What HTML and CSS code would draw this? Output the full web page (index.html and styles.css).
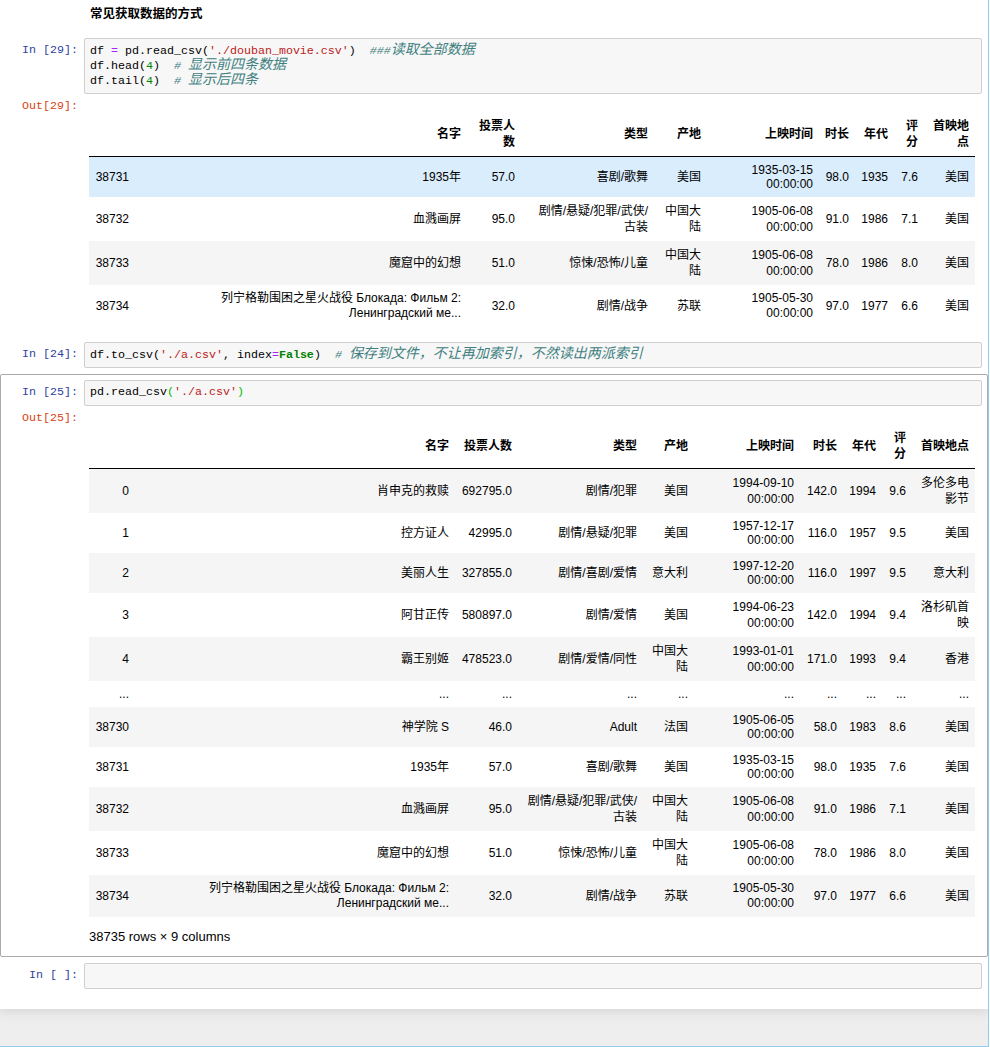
FILE: index.html
```html
<!DOCTYPE html>
<html lang="zh">
<head>
<meta charset="utf-8">
<title>Notebook</title>
<link rel="stylesheet" href="styles.css">
</head>
<body>
<div class="site">
  <div class="notebook">
    <div class="cell md-cell">
      <div class="prompt"></div>
      <div class="md-text">常见获取数据的方式</div>
    </div>

    <div class="cell">
      <div class="input">
        <div class="prompt in">In&nbsp;[29]:</div>
        <div class="code-box">
          <div class="line">df <span class="op">=</span> pd.read_csv(<span class="str">'./douban_movie.csv'</span>)  <span class="cm">###<span class="zh">读取全部数据</span></span></div>
          <div class="line">df.head(<span class="num">4</span>)  <span class="cm"># <span class="zh">显示前四条数据</span></span></div>
          <div class="line">df.tail(<span class="num">4</span>)  <span class="cm"># <span class="zh">显示后四条</span></span></div>
        </div>
      </div>
      <div class="output">
        <div class="prompt out">Out[29]:</div>
        <div class="out-sub">
          <table class="df t1">
            <colgroup><col><col><col><col><col><col><col><col><col><col></colgroup>
            <thead>
              <tr class="tall"><th></th><th>名字</th><th>投票人数</th><th>类型</th><th>产地</th><th>上映时间</th><th>时长</th><th>年代</th><th>评分</th><th>首映地点</th></tr>
            </thead>
            <tbody>
              <tr class="hover"><th>38731</th><td>1935年</td><td>57.0</td><td>喜剧/歌舞</td><td>美国</td><td>1935-03-15 00:00:00</td><td>98.0</td><td>1935</td><td>7.6</td><td>美国</td></tr>
              <tr class="tall"><th>38732</th><td>血溅画屏</td><td>95.0</td><td>剧情/悬疑/犯罪/武侠/古装</td><td>中国大陆</td><td>1905-06-08 00:00:00</td><td>91.0</td><td>1986</td><td>7.1</td><td>美国</td></tr>
              <tr class="tall"><th>38733</th><td>魔窟中的幻想</td><td>51.0</td><td>惊悚/恐怖/儿童</td><td>中国大陆</td><td>1905-06-08 00:00:00</td><td>78.0</td><td>1986</td><td>8.0</td><td>美国</td></tr>
              <tr class="mid"><th>38734</th><td>列宁格勒围困之星火战役 Блокада: Фильм 2: Ленинградский ме...</td><td>32.0</td><td>剧情/战争</td><td>苏联</td><td>1905-05-30 00:00:00</td><td>97.0</td><td>1977</td><td>6.6</td><td>美国</td></tr>
            </tbody>
          </table>
        </div>
      </div>
    </div>

    <div class="cell">
      <div class="input">
        <div class="prompt in">In&nbsp;[24]:</div>
        <div class="code-box">
          <div class="line">df.to_csv(<span class="str">'./a.csv'</span>, index<span class="op">=</span><span class="kw">False</span>)  <span class="cm"># <span class="zh">保存到文件，不让再加索引，不然读出两派索引</span></span></div>
        </div>
      </div>
    </div>

    <div class="cell selected">
      <div class="input">
        <div class="prompt in">In&nbsp;[25]:</div>
        <div class="code-box">
          <div class="line">pd.read_csv<span class="match">(</span><span class="str">'./a.csv'</span><span class="match">)</span></div>
        </div>
      </div>
      <div class="output">
        <div class="prompt out">Out[25]:</div>
        <div class="out-sub last">
          <table class="df t2">
            <colgroup><col><col><col><col><col><col><col><col><col><col></colgroup>
            <thead>
              <tr class="tall"><th></th><th>名字</th><th>投票人数</th><th>类型</th><th>产地</th><th>上映时间</th><th>时长</th><th>年代</th><th>评分</th><th>首映地点</th></tr>
            </thead>
            <tbody>
              <tr class="tall"><th>0</th><td>肖申克的救赎</td><td>692795.0</td><td>剧情/犯罪</td><td>美国</td><td>1994-09-10 00:00:00</td><td>142.0</td><td>1994</td><td>9.6</td><td>多伦多电影节</td></tr>
              <tr><th>1</th><td>控方证人</td><td>42995.0</td><td>剧情/悬疑/犯罪</td><td>美国</td><td>1957-12-17 00:00:00</td><td>116.0</td><td>1957</td><td>9.5</td><td>美国</td></tr>
              <tr><th>2</th><td>美丽人生</td><td>327855.0</td><td>剧情/喜剧/爱情</td><td>意大利</td><td>1997-12-20 00:00:00</td><td>116.0</td><td>1997</td><td>9.5</td><td>意大利</td></tr>
              <tr class="tall"><th>3</th><td>阿甘正传</td><td>580897.0</td><td>剧情/爱情</td><td>美国</td><td>1994-06-23 00:00:00</td><td>142.0</td><td>1994</td><td>9.4</td><td>洛杉矶首映</td></tr>
              <tr class="tall"><th>4</th><td>霸王别姬</td><td>478523.0</td><td>剧情/爱情/同性</td><td>中国大陆</td><td>1993-01-01 00:00:00</td><td>171.0</td><td>1993</td><td>9.4</td><td>香港</td></tr>
              <tr class="dots"><th>...</th><td>...</td><td>...</td><td>...</td><td>...</td><td>...</td><td>...</td><td>...</td><td>...</td><td>...</td></tr>
              <tr><th>38730</th><td>神学院 S</td><td>46.0</td><td>Adult</td><td>法国</td><td>1905-06-05 00:00:00</td><td>58.0</td><td>1983</td><td>8.6</td><td>美国</td></tr>
              <tr><th>38731</th><td>1935年</td><td>57.0</td><td>喜剧/歌舞</td><td>美国</td><td>1935-03-15 00:00:00</td><td>98.0</td><td>1935</td><td>7.6</td><td>美国</td></tr>
              <tr class="tall"><th>38732</th><td>血溅画屏</td><td>95.0</td><td>剧情/悬疑/犯罪/武侠/古装</td><td>中国大陆</td><td>1905-06-08 00:00:00</td><td>91.0</td><td>1986</td><td>7.1</td><td>美国</td></tr>
              <tr class="tall"><th>38733</th><td>魔窟中的幻想</td><td>51.0</td><td>惊悚/恐怖/儿童</td><td>中国大陆</td><td>1905-06-08 00:00:00</td><td>78.0</td><td>1986</td><td>8.0</td><td>美国</td></tr>
              <tr class="mid"><th>38734</th><td>列宁格勒围困之星火战役 Блокада: Фильм 2: Ленинградский ме...</td><td>32.0</td><td>剧情/战争</td><td>苏联</td><td>1905-05-30 00:00:00</td><td>97.0</td><td>1977</td><td>6.6</td><td>美国</td></tr>
            </tbody>
          </table>
          <p class="shape">38735 rows × 9 columns</p>
        </div>
      </div>
    </div>

    <div class="cell">
      <div class="input">
        <div class="prompt in">In&nbsp;[&nbsp;]:</div>
        <div class="code-box">
          <div class="line"></div>
        </div>
      </div>
    </div>
  </div>
</div>
</body>
</html>
```

FILE: styles.css
```css
html, body {
  margin: 0;
  padding: 0;
  background: #fff;
}

.site {
  width: 988px;
  height: 1046px;
  background: #eeeeee;
  border-right: 1px solid #8ecff2;
  border-bottom: 1px solid #8ecff2;
  overflow: hidden;
}

.notebook {
  background: #fff;
  padding-bottom: 14px;
  box-shadow: 0 0 12px 1px rgba(87, 87, 87, 0.2);
}

.cell {
  border: 1px solid transparent;
  border-radius: 2px;
  padding: 5px;
}

.cell.selected {
  border-color: #ababab;
}

.md-cell {
  display: flex;
  padding-top: 4px;
  padding-bottom: 10px;
}

.md-text {
  padding-left: 6px;
  font-family: "Noto Sans CJK SC", sans-serif;
  font-weight: bold;
  font-size: 12.5px;
  line-height: 16px;
  color: #000;
}

.input,
.output {
  display: flex;
}

.prompt {
  flex: 0 0 78px;
  box-sizing: border-box;
  padding-right: 6px;
  text-align: right;
  font-family: "Liberation Mono", monospace;
  font-size: 11.67px;
  white-space: nowrap;
}

.prompt.in {
  color: #303f9f;
  padding-top: 5px;
  line-height: 15px;
}

.prompt.out {
  color: #d84315;
  padding-top: 4px;
  line-height: 16px;
}

.code-box {
  flex: 1;
  min-width: 0;
  background: #f7f7f7;
  border: 1px solid #cfcfcf;
  border-radius: 2px;
  padding: 4px 4px 5px 5px;
  font-family: "Liberation Mono", monospace;
  font-size: 11.67px;
  color: #000;
}

.line {
  height: 15px;
  line-height: 15px;
  white-space: pre;
}

.zh {
  font-family: "Noto Sans CJK SC", sans-serif;
  font-size: 14px;
  line-height: 10px;
}

.op { color: #aa22ff; }
.str { color: #ba2121; }
.num { color: #008800; }
.kw { color: #008000; font-weight: bold; }
.cm { color: #408080; font-style: italic; }
.match { color: #00bb00; }

.out-sub {
  flex: 1;
  min-width: 0;
  padding: 6px 5px 3px 5px;
}

.out-sub.last {
  padding-bottom: 6px;
}

.df {
  margin-top: 12px;
  border-collapse: collapse;
  border-spacing: 0;
  table-layout: fixed;
  width: 886px;
  font-family: "Liberation Sans", "Noto Sans CJK SC", sans-serif;
  font-size: 12px;
  color: #000;
}

.df th,
.df td {
  padding: 6px 6px 6px 2px;
  text-align: right;
  vertical-align: middle;
  line-height: 14px;
  font-weight: normal;
  border: none;
}

.df thead th {
  font-weight: bold;
  border-bottom: 1px solid #000;
}

.df tr.tall th,
.df tr.tall td {
  line-height: 16px;
}

.df tr.mid th,
.df tr.mid td {
  line-height: 15px;
}

.df td:nth-child(2),
.df th:nth-child(2) {
  padding-left: 30px;
}

.t1 td:nth-child(4),
.t1 th:nth-child(4) {
  padding-left: 12px;
}

.df tbody tr:nth-child(odd) {
  background: #f5f5f5;
}

.df tbody tr.hover {
  background: #d9edfd;
}

.t1 col:nth-child(1) { width: 46px; }
.t1 col:nth-child(2) { width: 332px; }
.t1 col:nth-child(3) { width: 54px; }
.t1 col:nth-child(4) { width: 133px; }
.t1 col:nth-child(5) { width: 53px; }
.t1 col:nth-child(6) { width: 112px; }
.t1 col:nth-child(7) { width: 36px; }
.t1 col:nth-child(8) { width: 39px; }
.t1 col:nth-child(9) { width: 30px; }
.t1 col:nth-child(10) { width: 51px; }

.t2 col:nth-child(1) { width: 46px; }
.t2 col:nth-child(2) { width: 320px; }
.t2 col:nth-child(3) { width: 63px; }
.t2 col:nth-child(4) { width: 125px; }
.t2 col:nth-child(5) { width: 51px; }
.t2 col:nth-child(6) { width: 106px; }
.t2 col:nth-child(7) { width: 43px; }
.t2 col:nth-child(8) { width: 39px; }
.t2 col:nth-child(9) { width: 30px; }
.t2 col:nth-child(10) { width: 63px; }

.shape {
  margin: 12px 0 0 0;
  font-family: "Liberation Sans", sans-serif;
  font-size: 13px;
  line-height: 16px;
  color: #000;
}
```
